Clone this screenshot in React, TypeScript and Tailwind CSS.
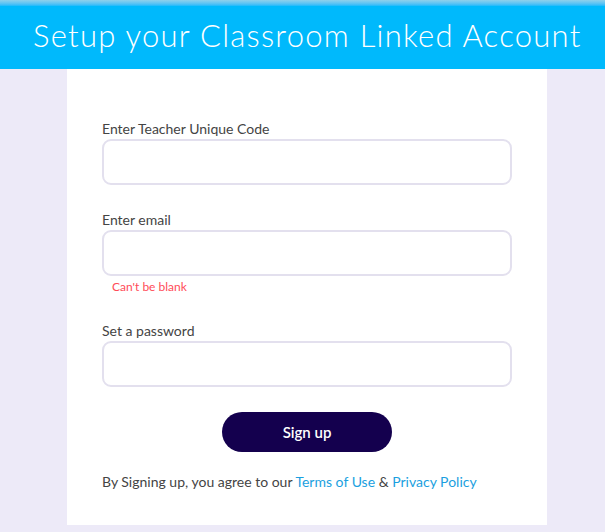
import { FC, ReactElement } from 'react';

const Field: FC<{ label: string; error?: string; className?: string }> = ({ label, error, className }): ReactElement => {
  return (
    <div className={className}>
      <label className="block h-[18px] text-[14px] leading-[18px] text-[#444]">{label}</label>
      <div className="mt-[1px] h-[46px] w-full rounded-[9px] border-2 border-[#e3e0ee] bg-white" />
      {error && <p className="mt-[3px] pl-[10px] text-[12px] leading-[15px] text-[#ff4b58]">{error}</p>}
    </div>
  );
};

export default function App(): ReactElement {
  return (
    <div className="flex min-h-[532px] w-full flex-col bg-[#edeaf8] font-['Lato','Liberation_Sans',sans-serif]">
      <header className="flex h-[69px] items-center bg-gradient-to-b from-[#8fd0ea] from-[0%] via-[#00b9fc] via-[9%] to-[#00b9fc] px-[33px]">
        <h1 className="pt-[2px] text-[31px] font-light tracking-[1.25px] whitespace-nowrap text-white">Setup your Classroom Linked Account</h1>
      </header>
      <main className="ml-[67px] h-[456px] w-[480px] bg-white px-[35px] pt-[51px]">
        <Field label="Enter Teacher Unique Code" />
        <Field label="Enter email" error="Can't be blank" className="mt-[26px]" />
        <Field label="Set a password" className="mt-[28px]" />
        <div className="mt-[25px] flex justify-center">
          <button className="h-[40px] w-[170px] rounded-full bg-[#14004e] text-[15px] font-semibold text-white">Sign up</button>
        </div>
        <p className="mt-[21px] text-[14px] leading-[18px] text-[#444]">
          By Signing up, you agree to our <span className="text-[#1b9fe0]">Terms of Use</span> &amp;{' '}
          <span className="text-[#1b9fe0]">Privacy Policy</span>
        </p>
      </main>
    </div>
  );
}
